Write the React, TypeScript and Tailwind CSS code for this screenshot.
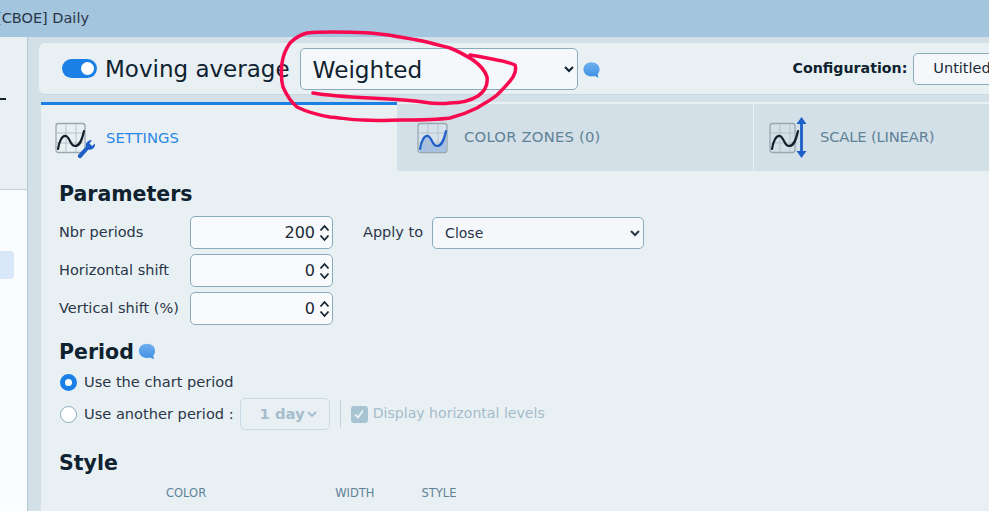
const font = { fontFamily: '"DejaVu Sans", sans-serif' };

function Bubble({ className = "" }: { className?: string }) {
  return (
    <svg viewBox="0 0 16 16" className={className}>
      <defs>
        <linearGradient id="bub" x1="0" y1="0" x2="0" y2="1">
          <stop offset="0" stopColor="#6fb0ee" />
          <stop offset="1" stopColor="#3f8fe4" />
        </linearGradient>
      </defs>
      <path d="M8 .6c4.400 0 7.600 2.900 7.600 6.800 0 1.900-.7 3.500-1.700 4.500l.6 3.500-3.700-1.700c-.9.3-1.800.4-2.800.4C3.600 14.100.4 11.200.4 7.400.4 3.500 3.600.6 8 .6z" fill="url(#bub)" />
    </svg>
  );
}

function Chart({ line = "#14212b", fill = "none", under = false, wrench = false, arrow = false, w = 30 }: { line?: string; fill?: string; under?: boolean; wrench?: boolean; arrow?: boolean; w?: number }) {
  return (
    <svg viewBox="0 0 44 44" className="w-[44px] h-[44px] shrink-0">
      <rect x="1" y="7.500" width={w - 1} height="29" rx="2.500" fill={fill} stroke="#9aa7ae" strokeWidth="1.300" />
      {under && <path d="M3 33c1-7 4-14 8-13 4 1 4 10 9 10 5 0 7-6 9-15v21H3z" fill="#a6c0e2" />}
      <path d="M11 8v28M21 8v28M2 17h26M2 27h26" stroke="#b6c2c9" strokeWidth="1" fill="none" />
      <path d="M3 33c1-7 4-14 8-13 4 1 4 10 9 10 5 0 7-6 9-15" stroke={line} strokeWidth="2.200" fill="none" strokeLinecap="round" />
      {wrench && (
        <path d="M23 39L31 30.500C30 27 33 24 37 24L34.500 27.500L37 30L40 27.500C40.500 31.500 37 34.500 33.500 33.500L26 42C24.500 43 22 41 23 39z" fill="#1f5fc8" />
      )}
      {arrow && (
        <path d="M32.500 1l5 7h-3.600v27h3.600l-5 7-5-7h3.600V8h-3.600z" fill="#1f5fc8" />
      )}
    </svg>
  );
}

function Spin() {
  return (
    <svg viewBox="0 0 11 18" className="w-[11px] h-[18px] shrink-0">
      <path d="M1.500 6.500l4-4.500 4 4.500M1.500 11.500l4 4.500 4-4.500" stroke="#16222c" strokeWidth="1.800" fill="none" />
    </svg>
  );
}

function NumField({ value }: { value: string }) {
  return (
    <div className="w-[143px] h-[33px] flex items-center justify-end gap-[4px] pr-[2px] bg-[#f8fafc] border border-[#8aabbd] rounded-[5px] text-[16px] text-[#1a2a38]">
      <span>{value}</span>
      <Spin />
    </div>
  );
}

export default function App() {
  return (
    <div style={font} className="w-[989px] h-[511px] overflow-hidden relative bg-[#d3e0e8] text-[#0f2230]">
      <div className="h-[37px] bg-[#a3c5dd] flex items-center pl-[1px] overflow-hidden text-[14.5px] text-[#2a3648]">
        <span className="ml-[-5px] whitespace-nowrap">[CBOE] Daily</span>
      </div>
      <div className="flex h-[474px]">
        <div className="w-[28px] shrink-0 flex flex-col border-r border-[#b4c7d3]">
          <div className="h-[153px] bg-[#e9f0f4] border-b border-[#c3d3dd] pt-[61px]">
            <div className="w-[6px] h-[2px] bg-[#16222c]" />
          </div>
          <div className="flex-1 bg-[#fbfcfe] pt-[61px]">
            <div className="w-[14px] h-[28px] bg-[#d8e8f8] rounded-r-[4px]" />
          </div>
        </div>
        <div className="flex-1 min-w-0 pl-[11px] pt-[6px]">
          <div className="h-[52px] w-[1000px] bg-[#e9f0f4] border-b border-[#c9d8e1] rounded-[6px] flex items-center pl-[23px]">
            <div className="w-[35px] h-[19px] rounded-full bg-[#1a80e5] flex items-center justify-end pr-[3px] mr-[8px]">
              <div className="w-[13px] h-[13px] rounded-full bg-white" />
            </div>
            <span className="text-[23px] whitespace-nowrap mr-[10px] mt-[2px]">Moving average</span>
            <select defaultValue="Weighted" style={font} className="w-[278px] h-[42px] pl-[8px] pr-[8px] pt-[2px] bg-[#f5f8fb] border border-[#8aabbd] rounded-[5px] text-[23.2px] text-[#0f2230]">
              <option>Weighted</option>
            </select>
            <Bubble className="w-[17px] h-[18px] ml-[5px] mt-[3px] shrink-0" />
            <span className="ml-[193px] text-[14.2px] font-bold whitespace-nowrap">Configuration:</span>
            <div className="ml-[6px] w-[120px] h-[32px] shrink-0 bg-[#f5f8fb] border border-[#8aabbd] rounded-[5px] pl-[19px] flex items-center text-[14.5px] text-[#1a2a38]">Untitled</div>
          </div>
          <div className="ml-[2px] mt-[7px] flex w-[960px] h-[69px] bg-[#e9f0f4] text-[14.8px]">
            <div className="w-[356px] border-t-[3px] border-[#1a80e5] flex items-center pl-[14px] text-[#2a88e6]">
              <Chart wrench />
              <span className="ml-[7px]">SETTINGS</span>
            </div>
            <div className="w-[356px] mt-[2px] bg-[#d3e0e7] flex items-center pl-[20px] text-[#5f8297]">
              <Chart line="#1f5fc8" fill="#d5e2ec" under />
              <span className="ml-[3px] tracking-[0.2px]">COLOR ZONES (0)</span>
            </div>
            <div className="flex-1 mt-[2px] ml-px bg-[#d3e0e7] flex items-center pl-[15px] text-[#5f8297]">
              <Chart arrow w={26} />
              <span className="ml-[7px] tracking-[-0.2px]">SCALE (LINEAR)</span>
            </div>
          </div>
          <div className="ml-[2px] w-[960px] h-[350px] bg-[#e9f0f4] pl-[18px] pt-[11px]">
            <div className="text-[20.5px] font-bold leading-[24px]">Parameters</div>
            <div className="flex mt-[10px]">
              <div className="flex flex-col gap-[5px] text-[14.5px] text-[#2a3648]">
                {[["Nbr periods", "200"], ["Horizontal shift", "0"], ["Vertical shift (%)", "0"]].map(([l, v]) => (
                  <div key={l} className="flex items-center h-[33px]">
                    <span className="w-[131px] whitespace-nowrap mt-[1px]">{l}</span>
                    <NumField value={v} />
                  </div>
                ))}
              </div>
              <div className="flex items-center h-[33px] ml-[30px] text-[14.5px] text-[#2a3648]">
                <span className="mr-[9px]">Apply to</span>
                <select defaultValue="Close" style={font} className="w-[212px] h-[32px] pl-[8px] pr-[4px] bg-[#f5f8fb] border border-[#8aabbd] rounded-[5px] text-[14px] text-[#2a3648]">
                  <option>Close</option>
                </select>
              </div>
            </div>
            <div className="flex items-center mt-[15px] h-[24px]">
              <span className="text-[20.5px] font-bold">Period</span>
              <Bubble className="w-[18px] h-[17px] ml-[4px] mt-[-1px]" />
            </div>
            <div className="flex items-center mt-[8px] h-[20px] pl-px text-[14.6px] text-[#2a3648]">
              <span className="w-[17px] h-[17px] rounded-full border-[5px] border-[#1a80e5] bg-white mr-[7px]" />
              Use the chart period
            </div>
            <div className="flex items-center mt-[6px] h-[32px] pl-px text-[14.6px] text-[#2a3648]">
              <span className="w-[17px] h-[17px] rounded-full border border-[#8aabbd] bg-white mr-[7px]" />
              <span className="whitespace-nowrap">Use another period :</span>
              <div className="ml-[6px] w-[90px] h-[32px] border border-[#c9dae4] rounded-[5px] flex items-center justify-end pr-[12px] gap-[2px] text-[14.8px] text-[#a4bccb] font-bold">
                1 day
                <svg viewBox="0 0 10 6" className="w-[10px] h-[6px]"><path d="M1 1l4 4 4-4" stroke="#a4bccb" strokeWidth="1.800" fill="none" /></svg>
              </div>
              <div className="w-px h-[28px] bg-[#c4d5df] ml-[10px] mr-[10px]" />
              <span className="w-[17px] h-[17px] rounded-[3px] bg-[#a8c3d2] flex items-center justify-center mr-[5px]">
                <svg viewBox="0 0 12 12" className="w-[12px] h-[12px]"><path d="M2 6.500l3 3 5-7" stroke="#e9f0f4" strokeWidth="2" fill="none" /></svg>
              </span>
              <span className="text-[14.1px] text-[#a4bccb] whitespace-nowrap">Display horizontal levels</span>
            </div>
            <div className="text-[20.5px] font-bold leading-[24px] mt-[21px]">Style</div>
            <div className="flex mt-[11px] text-[11.5px] text-[#5f8297] leading-[14px]">
              <span className="ml-[107px]">COLOR</span>
              <span className="ml-[129px]">WIDTH</span>
              <span className="ml-[47px]">STYLE</span>
            </div>
          </div>
        </div>
      </div>
      <svg viewBox="0 0 989 511" className="absolute inset-0 w-[989px] h-[511px] pointer-events-none">
        <path
          d="M313 93C330 96 350 97 370 98C390 99 410 100 423 102C435 104 442 104 450 103C462 103 470 101 478 96C485 91 488 84 487 77C485 70 480 65 473 60C465 55 458 51 450 48C435 44 428 42 417 40C400 37 385 34 370 33C350 32 325 31 307 33C299 35 295 38 290 43C285 50 283 56 282 63C281 72 281 80 283 87C287 96 291 102 297 107C307 112 318 115 330 117C342 118 352 120 363 120C378 121 390 120 403 120C420 120 435 120 450 118C462 115 469 112 477 108C485 103 491 100 497 95C504 88 509 83 513 77C516 72 516 68 515 65C510 63 504 61 497 60C486 58 478 56 470 55"
          stroke="#f6094f"
          strokeWidth="3.500"
          fill="none"
          strokeLinecap="round"
          strokeLinejoin="round"
        />
      </svg>
    </div>
  );
}
